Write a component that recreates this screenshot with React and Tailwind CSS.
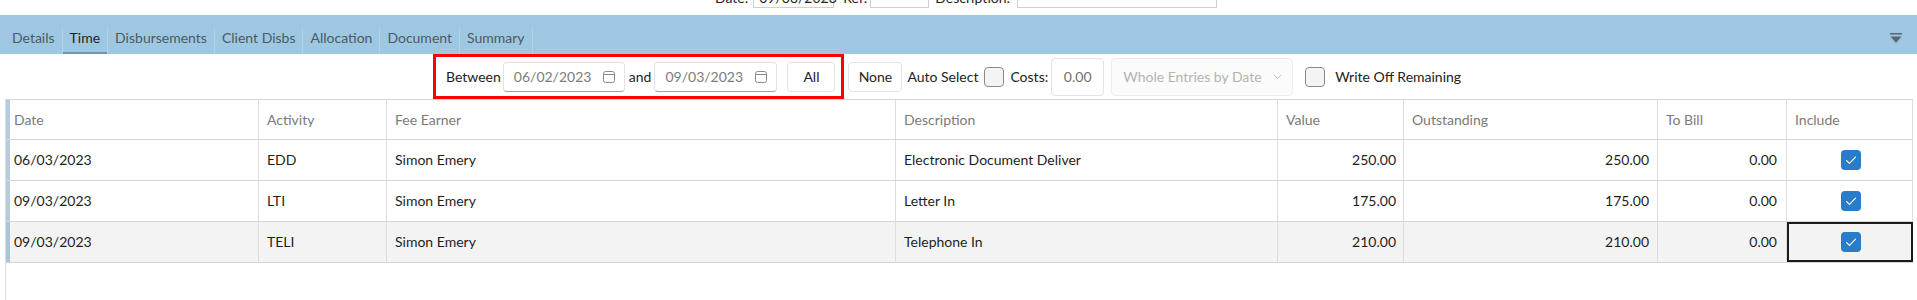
const cols = "grid grid-cols-[4px_249px_128px_509px_382px_126px_254px_129px_126px]";

function CalendarIcon() {
  return (
    <svg width="12" height="12" viewBox="0 0 12 12" fill="none">
      <rect x="0.5" y="0.5" width="11" height="11" rx="2" stroke="#8a8a8a" strokeWidth="1" />
      <line x1="0.5" y1="3.5" x2="11.5" y2="3.5" stroke="#8a8a8a" strokeWidth="1" />
    </svg>
  );
}

function DateInput({ value, w }) {
  return (
    <div className={`${w} h-[30px] rounded-[4px] border border-[#e3e3e3] border-b-[#a3a3a3] bg-white flex items-center justify-between pl-[10px] pr-[9px] text-[#7c7c7c]`}>
      <span>{value}</span>
      <CalendarIcon />
    </div>
  );
}

function Check({ on }) {
  if (on) {
    return (
      <div className="w-[20px] h-[20px] rounded-[4px] bg-[#2a7cc9] flex items-center justify-center">
        <svg width="20" height="20" viewBox="0 0 20 20" fill="none">
          <polyline points="5.5,10.5 8.5,13.3 14.5,7.2" stroke="#ffffff" strokeWidth="1.1" strokeLinecap="round" strokeLinejoin="round" />
        </svg>
      </div>
    );
  }
  return <div className="w-[20px] h-[20px] rounded-[4px] border border-[#8a8a8a] bg-[#f4f4f4]" />;
}

const rows = [
  { date: "06/03/2023", act: "EDD", fe: "Simon Emery", desc: "Electronic Document Deliver", val: "250.00", out: "250.00", bill: "0.00" },
  { date: "09/03/2023", act: "LTI", fe: "Simon Emery", desc: "Letter In", val: "175.00", out: "175.00", bill: "0.00" },
  { date: "09/03/2023", act: "TELI", fe: "Simon Emery", desc: "Telephone In", val: "210.00", out: "210.00", bill: "0.00", sel: true },
];

const tabs = ["Details", "Time", "Disbursements", "Client Disbs", "Allocation", "Document", "Summary"];

export default function App() {
  return (
    <div className="w-[1917px] h-[300px] bg-white overflow-hidden font-['Lato',sans-serif] text-[14px] text-[#222] leading-none">
      {/* clipped header strip */}
      <div className="h-[15px] overflow-hidden flex items-end pl-[715px] pb-[7px]">
        <div className="flex items-center">
          <span>Date:</span>
          <div className="ml-[5px] w-[81px] h-[20px] border border-[#cfcfcf] flex items-center pl-[5px]">09/03/2023</div>
          <span className="ml-[9px]">Ref:</span>
          <div className="ml-[3px] w-[59px] h-[20px] border border-[#cfcfcf]" />
          <span className="ml-[6px]">Description:</span>
          <div className="ml-[7px] w-[200px] h-[20px] border border-[#cfcfcf]" />
        </div>
      </div>

      {/* blue tab band */}
      <div className="h-[39px] bg-[#9ec8e2] flex items-end justify-between">
        <div className="flex items-end pl-[5px]">
          {tabs.map((t) => (
            <div key={t} className="flex items-end">
              <div
                className={
                  t === "Time"
                    ? "h-[32px] px-[7px] flex items-center pt-[1px] border-b-2 border-[#7195ae] text-[#1f1f1f]"
                    : "h-[32px] px-[7px] flex items-center pb-[1px] text-[#4d5963]"
                }
              >
                {t}
              </div>
              <div className="w-px h-[26px] bg-[#b3d2e7]" />
            </div>
          ))}
        </div>
        <div className="self-center mt-[7px] mr-[15px]">
          <svg width="12" height="11" viewBox="0 0 12 11">
            <rect x="0" y="0" width="12" height="1.5" fill="#5b6670" />
            <polygon points="0.5,3.5 11.5,3.5 6,10" fill="#5b6670" />
          </svg>
        </div>
      </div>

      {/* toolbar */}
      <div className="h-[45px] flex items-center pl-[433px]">
        <div className="h-[45px] border-[3px] border-[#ff0000] flex items-center pl-[10px] pr-[6px]">
          <span className="text-[#222]">Between</span>
          <div className="ml-[2px]">
            <DateInput value="06/02/2023" w="w-[122px]" />
          </div>
          <span className="ml-[4px]">and</span>
          <div className="ml-[3px]">
            <DateInput value="09/03/2023" w="w-[123px]" />
          </div>
          <div className="ml-[10px] w-[48px] h-[30px] rounded-[4px] border border-[#e3e3e3] bg-white flex items-center justify-center">All</div>
        </div>
        <div className="ml-[4px] w-[54px] h-[30px] rounded-[4px] border border-[#e3e3e3] bg-white flex items-center justify-center">None</div>
        <span className="ml-[5px]">Auto Select</span>
        <div className="ml-[6px]">
          <Check />
        </div>
        <span className="ml-[6px]">Costs:</span>
        <div className="ml-[3px] w-[53px] h-[38px] rounded-[4px] border border-[#e3e3e3] bg-white flex items-center justify-center text-[#6f6f6f]">0.00</div>
        <div className="ml-[7px] w-[182px] h-[38px] rounded-[4px] border border-[#ededed] bg-[#fbfbfb] flex items-center justify-between pl-[11px] pr-[10px] text-[#b3b3b3]">
          <span>Whole Entries by Date</span>
          <svg width="9" height="6" viewBox="0 0 9 6" fill="none">
            <polyline points="1,1 4.5,4.5 8,1" stroke="#c4c4c4" strokeWidth="1" />
          </svg>
        </div>
        <div className="ml-[12px]">
          <Check />
        </div>
        <span className="ml-[10px]">Write Off Remaining</span>
      </div>

      {/* table */}
      <div className="ml-[5px] w-[1908px] h-[201px] border-l border-[#dcdcdc]">
        <div className={`${cols} h-[41px] border-t border-b border-[#d5d5de] text-[#7a7a7a]`}>
          <div className="bg-[#b3cde0]" />
          <div className="border-r border-[#dcdce4] flex items-center pl-[4px]">Date</div>
          <div className="border-r border-[#dcdce4] flex items-center pl-[8px]">Activity</div>
          <div className="border-r border-[#dcdce4] flex items-center pl-[8px]">Fee Earner</div>
          <div className="border-r border-[#dcdce4] flex items-center pl-[8px]">Description</div>
          <div className="border-r border-[#dcdce4] flex items-center pl-[8px]">Value</div>
          <div className="border-r border-[#dcdce4] flex items-center pl-[8px]">Outstanding</div>
          <div className="border-r border-[#dcdce4] flex items-center pl-[8px]">To Bill</div>
          <div className="border-r border-[#dcdce4] flex items-center pl-[8px]">Include</div>
        </div>
        {rows.map((r, i) => (
          <div key={i} className={`${cols} h-[41px] border-b border-[#d5d5de] text-[#1e1e1e] ${r.sel ? "bg-[#f3f3f3]" : "bg-white"}`}>
            <div className={r.sel ? "bg-[#a9c5da]" : "bg-[#b3cde0]"} />
            <div className="border-r border-[#dcdce4] flex items-center pl-[4px]">{r.date}</div>
            <div className="border-r border-[#dcdce4] flex items-center pl-[8px]">{r.act}</div>
            <div className="border-r border-[#dcdce4] flex items-center pl-[8px]">{r.fe}</div>
            <div className="border-r border-[#dcdce4] flex items-center pl-[8px]">{r.desc}</div>
            <div className="border-r border-[#dcdce4] flex items-center justify-end pr-[7px]">{r.val}</div>
            <div className="border-r border-[#dcdce4] flex items-center justify-end pr-[8px]">{r.out}</div>
            <div className="border-r border-[#dcdce4] flex items-center justify-end pr-[9px]">{r.bill}</div>
            <div
              className={
                r.sel
                  ? "border-r border-[#dcdce4] flex items-center justify-center outline-2 outline-[#1a1a1a] -outline-offset-2 pl-[2px]"
                  : "border-r border-[#dcdce4] flex items-center justify-center pl-[2px]"
              }
            >
              <Check on />
            </div>
          </div>
        ))}
      </div>
    </div>
  );
}
